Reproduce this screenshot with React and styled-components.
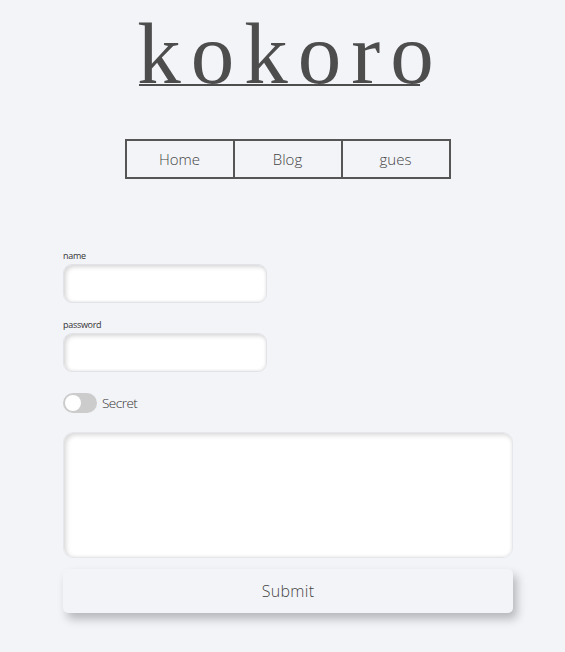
import React from "react";
import styled, { createGlobalStyle } from "styled-components";

const Global = createGlobalStyle`
  html, body { margin: 0; padding: 0; background: #f3f4f8; }
  body { font-family: "Open Sans", "Noto Sans", sans-serif; color: #444; }
`;

const Page = styled.div`
  width: 565px;
  min-height: 652px;
  box-sizing: border-box;
  padding: 6px 0 0 10px;
  display: flex;
  flex-direction: column;
  align-items: center;
`;

const Title = styled.h1`
  margin: 0 0 0 6px;
  position: relative;
  font-family: "Liberation Serif", "DejaVu Serif", serif;
  font-weight: 400;
  font-size: 87px;
  line-height: 96px;
  letter-spacing: 10px;
  color: #4d4d4d;
  &::after {
    content: "";
    position: absolute;
    left: 2px;
    right: 24px;
    bottom: 16px;
    height: 2px;
    background: #4d4d4d;
  }
`;

const Nav = styled.nav`
  margin-top: 37px;
  display: flex;
  border: 2px solid #555;
`;

const NavItem = styled.div`
  width: 106px;
  height: 36px;
  display: flex;
  align-items: center;
  justify-content: center;
  font-weight: 300;
  font-size: 15px;
  color: #444;
  & + & { border-left: 2px solid #555; }
`;

const Form = styled.form`
  align-self: stretch;
  margin: 71px 52px 0 53px;
  display: flex;
  flex-direction: column;
`;

const Label = styled.label`
  font-size: 9px;
  font-weight: 400;
  color: #333;
  letter-spacing: -0.3px;
  line-height: 12px;
  margin-bottom: 2px;
`;

const Input = styled.div`
  width: 204px;
  height: 39px;
  box-sizing: border-box;
  border-radius: 9px;
  background: #fff;
  border: 1px solid #e2e3e8;
  box-shadow: inset 2px 2px 4px rgba(0,0,0,0.16), inset -1px -1px 3px rgba(0,0,0,0.05);
  margin-bottom: ${p => p.$mb || 0}px;
`;

const ToggleRow = styled.div`
  display: flex;
  align-items: center;
  gap: 5px;
  margin-top: 21px;
`;

const Switch = styled.div`
  width: 34px;
  height: 20px;
  border-radius: 10px;
  background: #cccccc;
  position: relative;
  &::after {
    content: "";
    position: absolute;
    left: 2px;
    top: 2px;
    width: 16px;
    height: 16px;
    border-radius: 50%;
    background: #fff;
  }
`;

const SwitchLabel = styled.span`
  font-size: 13.5px;
  font-weight: 300;
  color: #333;
  letter-spacing: -0.5px;
`;

const TextArea = styled.div`
  margin-top: 19px;
  height: 126px;
  box-sizing: border-box;
  border-radius: 10px;
  background: #fff;
  border: 1px solid #e6e7ec;
  box-shadow: inset 2px 2px 5px rgba(0,0,0,0.16), inset -1px -1px 3px rgba(0,0,0,0.04);
`;

const Submit = styled.button`
  margin-top: 11px;
  height: 44px;
  border: none;
  border-radius: 5px;
  background: #f3f4f8;
  box-shadow: 4px 6px 10px rgba(0,0,0,0.25);
  font-family: "Open Sans", sans-serif;
  font-weight: 300;
  font-size: 16px;
  color: #444;
  letter-spacing: 0.3px;
`;

export default function App() {
  return (
    <>
      <Global />
      <Page>
        <Title>kokoro</Title>
        <Nav>
          <NavItem>Home</NavItem>
          <NavItem>Blog</NavItem>
          <NavItem>gues</NavItem>
        </Nav>
        <Form onSubmit={e => e.preventDefault()}>
          <Label>name</Label>
          <Input $mb={16} />
          <Label>password</Label>
          <Input />
          <ToggleRow>
            <Switch />
            <SwitchLabel>Secret</SwitchLabel>
          </ToggleRow>
          <TextArea />
          <Submit type="button">Submit</Submit>
        </Form>
      </Page>
    </>
  );
}
